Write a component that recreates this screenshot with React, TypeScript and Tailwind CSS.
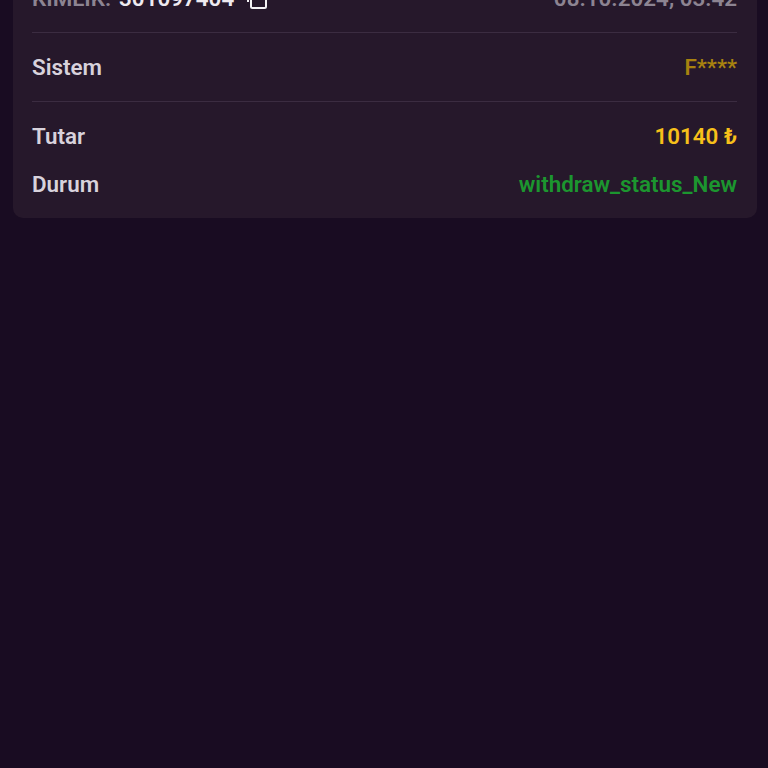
export default function App() {
  return (
    <div className="h-[768px] overflow-hidden bg-[#190c22] font-['Roboto',sans-serif] font-semibold text-[22.4px] leading-[26px]">
      <div className="ml-[13px] -mt-[15px] w-[744px] rounded-[10px] bg-[#26182b] pl-[19px] pr-[20px] pb-[10px]">
        {/* id and date */}
        <div className="flex items-center justify-between border-b border-[#3b2c41] pb-[21px]">
          <div className="flex items-center">
            <span className="text-[#8d8492]">KIMLIK:</span>
            <span className="ml-[8px] text-[#eeeaf0]">301097404</span>
            <svg className="ml-[11px] mt-[2px]" width="22" height="22" viewBox="0 0 22 22" fill="none" stroke="#f4f2f5" strokeWidth="2">
              <rect x="6" y="3" width="15" height="17" rx="1.5" />
              <path d="M3 7v7" />
            </svg>
          </div>
          <span className="text-[#8d8492]">08.10.2024, 03:42</span>
        </div>

        {/* system */}
        <div className="flex h-[69px] items-center justify-between border-b border-[#3b2c41]">
          <span className="text-[#d8d2dc]">Sistem</span>
          <span className="text-[#a8820f]">F****</span>
        </div>

        {/* amount */}
        <div className="mt-[10px] flex h-[48px] items-center justify-between">
          <span className="text-[#d8d2dc]">Tutar</span>
          <span className="text-[#f7c01a]">10140 ₺</span>
        </div>

        {/* status */}
        <div className="flex h-[48px] items-center justify-between">
          <span className="text-[#d8d2dc]">Durum</span>
          <span className="text-[#1c962f]">withdraw_status_New</span>
        </div>
      </div>
    </div>
  )
}
